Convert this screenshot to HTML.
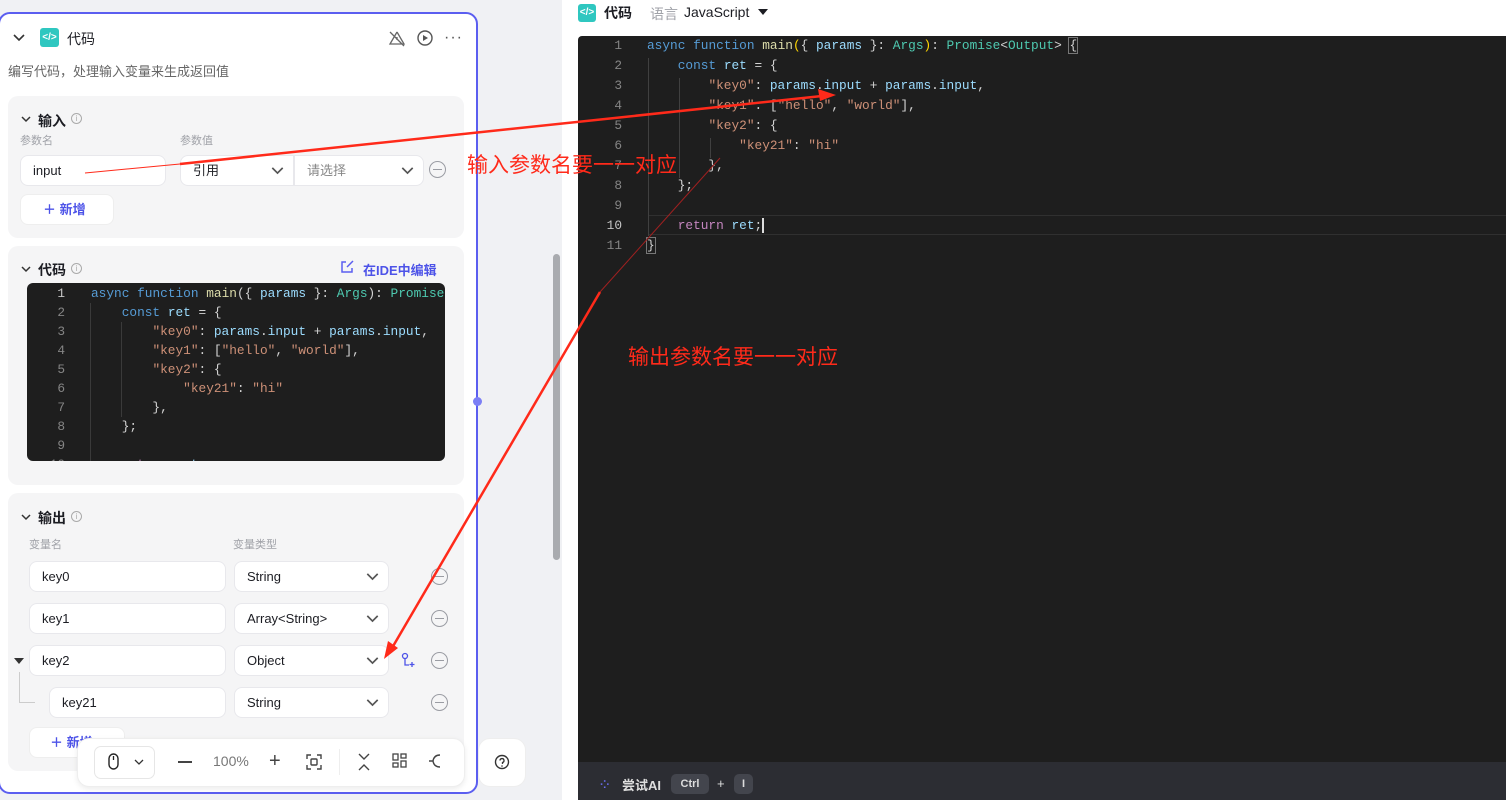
<!DOCTYPE html>
<html><head><meta charset="utf-8"><style>
*{box-sizing:border-box;margin:0;padding:0}
body{width:1506px;height:800px;overflow:hidden;position:relative;background:#f0f1f4;font-family:"Liberation Sans","Noto Sans CJK SC",sans-serif;font-size:13px;color:#1c1d23}
.a{position:absolute}
.sec{position:absolute;background:#f5f5f6;border-radius:10px}
.inp{position:absolute;background:#fff;border:1px solid #e8e8ec;border-radius:8px;height:31px;font-size:13px;line-height:29px;padding-left:12px;color:#1c1d23}
.chev{position:absolute;right:9px;top:8px;width:13px;height:13px}
.min{position:absolute;width:17px;height:17px;border:1.5px solid #9a9ca3;border-radius:50%}
.min:after{content:"";position:absolute;left:3px;right:3px;top:6.5px;height:1.5px;background:#9a9ca3}
.mono{font-family:"Liberation Mono","DejaVu Sans Mono",monospace;font-size:12.8px;white-space:pre}
.kw{color:#569cd6}.fn{color:#dcdcaa}.v{color:#9cdcfe}.ty{color:#4ec9b0}.s{color:#ce9178}.p{color:#d4d4d4}.r{color:#c586c0}.y{color:#ffd700}
.lab{font-size:11px;color:#a0a2a8}
.h{font-weight:bold;font-size:14px}
</style></head><body>
<div class="a" style="left:562px;top:0;width:944px;height:800px;background:#fff"></div>
<div class="a" style="left:578px;top:4px;width:18px;height:18px;background:#2fc7c0;border-radius:3px;color:#fff;font-size:10px;line-height:18px;text-align:center;font-weight:bold">&lt;/&gt;</div>
<div class="a h" style="left:604px;top:3px;font-size:14px">代码</div>
<div class="a" style="left:650px;top:4px;color:#a0a2a8;font-size:14px">语言</div>
<div class="a" style="left:684px;top:4px;font-size:14px;color:#1c1d23">JavaScript</div>
<div class="a" style="left:758px;top:9px;border-left:5px solid transparent;border-right:5px solid transparent;border-top:6px solid #1c1d23"></div>
<div class="a" style="left:578px;top:36px;width:928px;height:726px;background:#1e1e1e;border-radius:4px 0 0 0"></div>
<div class="a" style="left:578px;top:762px;width:928px;height:38px;background:#2c2d33"></div>
<div class="a" style="left:648px;top:215px;width:858px;height:20px;border-top:1px solid #303030;border-bottom:1px solid #303030"></div>
<div class="a mono" style="left:590px;top:36px;width:32px;text-align:right;line-height:20px;color:#858585">1
2
3
4
5
6
7
8
9
<span style="color:#c6c6c6">10</span>
11</div>
<div class="a" style="left:648px;top:58px;width:1px;height:178px;background:#404040"></div>
<div class="a" style="left:679px;top:78px;width:1px;height:100px;background:#404040"></div>
<div class="a" style="left:710px;top:138px;width:1px;height:20px;background:#404040"></div>
<div class="a mono" style="left:647px;top:36px;line-height:20px;color:#d4d4d4"><span class="kw">async</span> <span class="kw">function</span> <span class="fn">main</span><span class="y">(</span>{ <span class="v">params</span> }: <span class="ty">Args</span><span class="y">)</span>: <span class="ty">Promise</span>&lt;<span class="ty">Output</span>&gt; <span style="outline:1px solid #777">{</span>
    <span class="kw">const</span> <span class="v">ret</span> = {
        <span class="s">"key0"</span>: <span class="v">params</span>.<span class="v">input</span> + <span class="v">params</span>.<span class="v">input</span>,
        <span class="s">"key1"</span>: [<span class="s">"hello"</span>, <span class="s">"world"</span>],
        <span class="s">"key2"</span>: {
            <span class="s">"key21"</span>: <span class="s">"hi"</span>
        },
    };

    <span class="r">return</span> <span class="v">ret</span>;<span style="border-left:2px solid #ddd"></span>
<span style="outline:1px solid #777">}</span></div>
<div class="a" style="left:598px;top:775px;color:#6b6ef5;font-size:16px">⁘</div>
<div class="a" style="left:622px;top:775px;color:#ddd;font-weight:bold;font-size:13px">尝试AI</div>
<div class="a" style="left:671px;top:774px;width:38px;height:20px;background:#43454d;border-radius:5px;color:#ddd;font-weight:bold;font-size:11px;text-align:center;line-height:20px">Ctrl</div>
<div class="a" style="left:717px;top:776px;color:#ddd;font-size:13px">+</div>
<div class="a" style="left:734px;top:774px;width:19px;height:20px;background:#43454d;border-radius:5px;color:#ddd;font-weight:bold;font-size:11px;text-align:center;line-height:20px">I</div>
<div class="a" style="left:553px;top:254px;width:7px;height:306px;background:#a9abaf;border-radius:4px"></div>
<div class="a" style="left:-2px;top:12px;width:480px;height:782px;background:#fff;border:2px solid #5b5ef0;border-radius:12px"></div>
<div class="a" style="left:473px;top:397px;width:9px;height:9px;background:#7c7ff5;border-radius:50%"></div>
<svg class="a" style="left:13px;top:33px" width="12" height="10"><path d="M1 2l5 5 5-5" stroke="#333" stroke-width="1.6" fill="none"/></svg>
<div class="a" style="left:40px;top:28px;width:19px;height:19px;background:#2fc7c0;border-radius:3px;color:#fff;font-size:10px;line-height:19px;text-align:center;font-weight:bold">&lt;/&gt;</div>
<div class="a" style="left:67px;top:29px;font-size:14px">代码</div>
<svg class="a" style="left:388px;top:29px" width="18" height="18"><path d="M9 3L2 15h14L9 3M9 8v3M2 3l14 14" stroke="#666" stroke-width="1.3" fill="none"/></svg>
<svg class="a" style="left:416px;top:29px" width="18" height="18"><circle cx="9" cy="9" r="7" stroke="#555" stroke-width="1.4" fill="none"/><path d="M7 6v6l5-3z" fill="#555"/></svg>
<div class="a" style="left:444px;top:30px;font-size:16px;color:#555;letter-spacing:1px;line-height:16px">···</div>
<div class="a" style="left:8px;top:61px;color:#666;font-size:13px">编写代码，处理输入变量来生成返回值</div>
<div class="sec" style="left:8px;top:96px;width:456px;height:142px"></div>
<svg class="a" style="left:21px;top:115px" width="10" height="8"><path d="M1 2l4 4 4-4" stroke="#333" stroke-width="1.5" fill="none"/></svg>
<div class="a h" style="left:38px;top:111px">输入</div>
<div class="a" style="left:71px;top:113px;width:11px;height:11px;border:1px solid #aaa;border-radius:50%;font-size:8px;color:#aaa;text-align:center;line-height:9px">i</div>
<div class="a lab" style="left:20px;top:132px">参数名</div>
<div class="a lab" style="left:180px;top:132px">参数值</div>
<div class="inp" style="left:20px;top:155px;width:146px">input</div>
<div class="inp" style="left:180px;top:155px;width:114px;border-radius:8px 0 0 8px">引用<svg class="chev" viewBox="0 0 10 10"><path d="M1 3l4 4 4-4" stroke="#555" stroke-width="1.3" fill="none"/></svg></div>
<div class="inp" style="left:294px;top:155px;width:130px;border-radius:0 8px 8px 0;color:#888">请选择<svg class="chev" viewBox="0 0 10 10"><path d="M1 3l4 4 4-4" stroke="#555" stroke-width="1.3" fill="none"/></svg></div>
<div class="min" style="left:429px;top:161px"></div>
<div class="a" style="left:20px;top:194px;width:94px;height:31px;background:#fff;border:1px solid #eee;border-radius:8px;color:#4d53e8;font-weight:bold;font-size:13px;line-height:29px;padding-left:22px">＋ 新增</div>
<div class="sec" style="left:8px;top:246px;width:456px;height:239px"></div>
<svg class="a" style="left:21px;top:265px" width="10" height="8"><path d="M1 2l4 4 4-4" stroke="#333" stroke-width="1.5" fill="none"/></svg>
<div class="a h" style="left:38px;top:260px">代码</div>
<div class="a" style="left:71px;top:263px;width:11px;height:11px;border:1px solid #aaa;border-radius:50%;font-size:8px;color:#aaa;text-align:center;line-height:9px">i</div>
<svg class="a" style="left:340px;top:260px" width="14" height="14"><path d="M6 2H2v10h10V8M7 7l6-6" stroke="#5b5ef0" stroke-width="1.5" fill="none"/></svg>
<div class="a" style="left:363px;top:260px;color:#4d53e8;font-weight:bold;font-size:13px">在IDE中编辑</div>
<div class="a" style="left:27px;top:283px;width:418px;height:178px;background:#1e1e1e;border-radius:6px;overflow:hidden">
<div class="a mono" style="left:0;top:1px;width:38px;text-align:right;line-height:19px;color:#858585"><span style="color:#c6c6c6">1</span>
2
3
4
5
6
7
8
9
10</div>
<div class="a" style="left:63px;top:20px;width:1px;height:160px;background:#3a3a3a"></div>
<div class="a" style="left:94px;top:39px;width:1px;height:95px;background:#3a3a3a"></div>
<div class="a mono" style="left:64px;top:1px;line-height:19px;color:#d4d4d4"><span class="kw">async</span> <span class="kw">function</span> <span class="fn">main</span>({ <span class="v">params</span> }: <span class="ty">Args</span>): <span class="ty">Promise</span>
    <span class="kw">const</span> <span class="v">ret</span> = {
        <span class="s">"key0"</span>: <span class="v">params</span>.<span class="v">input</span> + <span class="v">params</span>.<span class="v">input</span>,
        <span class="s">"key1"</span>: [<span class="s">"hello"</span>, <span class="s">"world"</span>],
        <span class="s">"key2"</span>: {
            <span class="s">"key21"</span>: <span class="s">"hi"</span>
        },
    };

    <span class="r">return</span> <span class="v">ret</span>;</div>
</div>
<div class="sec" style="left:8px;top:493px;width:456px;height:278px"></div>
<svg class="a" style="left:21px;top:513px" width="10" height="8"><path d="M1 2l4 4 4-4" stroke="#333" stroke-width="1.5" fill="none"/></svg>
<div class="a h" style="left:38px;top:508px">输出</div>
<div class="a" style="left:71px;top:511px;width:11px;height:11px;border:1px solid #aaa;border-radius:50%;font-size:8px;color:#aaa;text-align:center;line-height:9px">i</div>
<div class="a lab" style="left:29px;top:536px">变量名</div>
<div class="a lab" style="left:233px;top:536px">变量类型</div>
<div class="inp" style="left:29px;top:561px;width:197px">key0</div>
<div class="inp" style="left:234px;top:561px;width:155px">String<svg class="chev" viewBox="0 0 10 10"><path d="M1 3l4 4 4-4" stroke="#555" stroke-width="1.3" fill="none"/></svg></div>
<div class="min" style="left:431px;top:568px"></div>
<div class="inp" style="left:29px;top:603px;width:197px">key1</div>
<div class="inp" style="left:234px;top:603px;width:155px">Array&lt;String&gt;<svg class="chev" viewBox="0 0 10 10"><path d="M1 3l4 4 4-4" stroke="#555" stroke-width="1.3" fill="none"/></svg></div>
<div class="min" style="left:431px;top:610px"></div>
<div class="a" style="left:14px;top:658px;border-left:5px solid transparent;border-right:5px solid transparent;border-top:6px solid #333"></div>
<div class="a" style="left:19px;top:672px;width:16px;height:31px;border-left:1px solid #ccc;border-bottom:1px solid #ccc"></div>
<div class="inp" style="left:29px;top:645px;width:197px">key2</div>
<div class="inp" style="left:234px;top:645px;width:155px">Object<svg class="chev" viewBox="0 0 10 10"><path d="M1 3l4 4 4-4" stroke="#555" stroke-width="1.3" fill="none"/></svg></div>
<svg class="a" style="left:400px;top:652px" width="16" height="16"><circle cx="5" cy="4" r="2.5" stroke="#4d53e8" stroke-width="1.3" fill="none"/><path d="M5 7v6h4M12 10v5M9.5 12.5h5" stroke="#4d53e8" stroke-width="1.3" fill="none"/></svg>
<div class="min" style="left:431px;top:652px"></div>
<div class="inp" style="left:49px;top:687px;width:177px">key21</div>
<div class="inp" style="left:234px;top:687px;width:155px">String<svg class="chev" viewBox="0 0 10 10"><path d="M1 3l4 4 4-4" stroke="#555" stroke-width="1.3" fill="none"/></svg></div>
<div class="min" style="left:431px;top:694px"></div>
<div class="a" style="left:29px;top:727px;width:96px;height:31px;background:#fff;border:1px solid #eee;border-radius:8px;color:#4d53e8;font-weight:bold;line-height:29px;padding-left:20px">＋ 新增</div>
<div class="a" style="left:77px;top:738px;width:388px;height:49px;background:#fff;border-radius:12px;box-shadow:0 2px 6px rgba(0,0,0,.08);border:1px solid #eee"></div>
<div class="a" style="left:94px;top:746px;width:61px;height:33px;border:1px solid #e6e6e6;border-radius:7px"></div>
<svg class="a" style="left:105px;top:753px" width="44" height="18"><rect x="4" y="1" width="9" height="15" rx="4.5" stroke="#222" stroke-width="1.4" fill="none"/><path d="M8.5 3v4" stroke="#222" stroke-width="1.3"/><path d="M30 7l4 4 4-4" stroke="#333" stroke-width="1.3" fill="none"/></svg>
<div class="a" style="left:178px;top:761px;width:14px;height:1.5px;background:#444"></div>
<div class="a" style="left:213px;top:753px;color:#777;font-size:14px">100%</div>
<div class="a" style="left:269px;top:750px;font-size:20px;color:#444">+</div>
<svg class="a" style="left:305px;top:753px" width="18" height="18"><path d="M2 6V2h4M12 2h4v4M16 12v4h-4M6 16H2v-4" stroke="#444" stroke-width="1.4" fill="none"/><rect x="6" y="6" width="6" height="6" rx="1" stroke="#444" stroke-width="1.4" fill="none"/></svg>
<div class="a" style="left:339px;top:749px;width:1px;height:26px;background:#eee"></div>
<svg class="a" style="left:356px;top:753px" width="16" height="18"><path d="M3 1l5 5 5-5M3 17l5-5 5 5" stroke="#444" stroke-width="1.4" fill="none"/></svg>
<svg class="a" style="left:392px;top:753px" width="16" height="16"><rect x="1" y="1" width="5" height="6" stroke="#444" stroke-width="1.3" fill="none"/><rect x="9" y="1" width="5" height="4" stroke="#444" stroke-width="1.3" fill="none"/><rect x="1" y="10" width="5" height="4" stroke="#444" stroke-width="1.3" fill="none"/><rect x="9" y="8" width="5" height="6" stroke="#444" stroke-width="1.3" fill="none"/></svg>
<svg class="a" style="left:428px;top:753px" width="16" height="16"><path d="M12 2Q6 2 5 8Q6 14 12 14M1 8h4" stroke="#444" stroke-width="1.4" fill="none"/></svg>
<div class="a" style="left:478px;top:738px;width:48px;height:49px;background:#fff;border-radius:12px;border:1px solid #eee"></div>
<svg class="a" style="left:494px;top:754px" width="16" height="16"><circle cx="8" cy="8" r="6.5" stroke="#333" stroke-width="1.4" fill="none"/><path d="M6 6.5a2 2 0 1 1 2.5 2v1.5" stroke="#333" stroke-width="1.3" fill="none"/><circle cx="8" cy="12" r=".8" fill="#333"/></svg>
<svg class="a" style="left:0;top:0" width="1506" height="800">
<line x1="85" y1="173" x2="180" y2="164" stroke="#ff2a1a" stroke-width="1"/>
<line x1="180" y1="164" x2="822" y2="96" stroke="#ff2a1a" stroke-width="2.5"/>
<path d="M836 95l-18-6 2 12z" fill="#ff2a1a"/>
<line x1="720" y1="158" x2="600" y2="292" stroke="#a02020" stroke-width="1"/>
<line x1="600" y1="292" x2="392" y2="648" stroke="#ff2a1a" stroke-width="2.5"/>
<path d="M384 659l4-18 10 7z" fill="#ff2a1a"/>
<text x="467" y="172" fill="#ff2a1a" font-size="21" font-family="Liberation Sans,Noto Sans CJK SC,sans-serif">输入参数名要一一对应</text>
<text x="628" y="364" fill="#ff2a1a" font-size="21" font-family="Liberation Sans,Noto Sans CJK SC,sans-serif">输出参数名要一一对应</text>
</svg>
</body></html>
